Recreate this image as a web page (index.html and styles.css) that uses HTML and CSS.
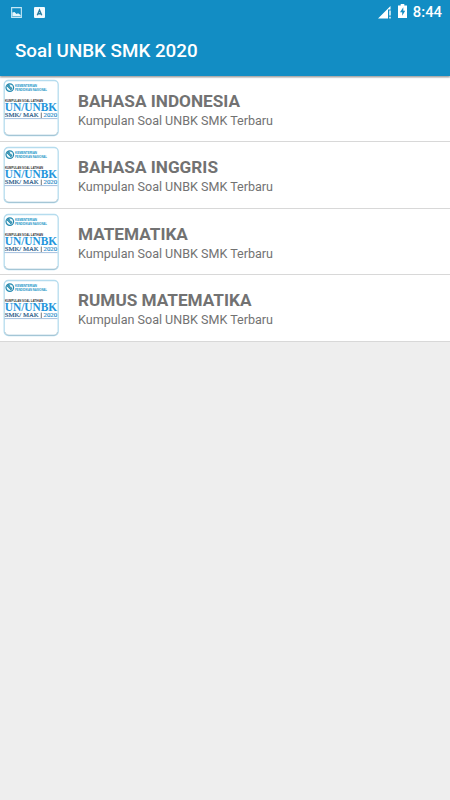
FILE: index.html
```html
<!DOCTYPE html>
<html lang="id">
<head>
<meta charset="utf-8">
<title>Soal UNBK SMK 2020</title>
<link rel="stylesheet" href="styles.css">
</head>
<body>
<header class="top">
  <div class="status">
    <svg class="picture" viewBox="0 0 12 12"><path d="M.7 .7h10.6v10.6H.7z" fill="none" stroke="#c5e8f6" stroke-width="1.2"/><path d="M1.5 10.2V6L3.8 5.4 6 7.6l1.7-.8 2.8 2v1.4z" fill="#e5f6fc"/></svg>
    <svg class="letter" viewBox="0 0 11 11"><rect width="11" height="11" rx="1" fill="#f2fbff"/><path d="M3.3 8.2 5.5 3l2.2 5.2M4.2 6.7h2.6" fill="none" stroke="#287da0" stroke-width="1.4"/></svg>
    <span class="spacer"></span>
    <svg class="signal" viewBox="0 0 14 13"><path d="M0 12.5 12.5 0v3.5H10v9z" fill="#fff"/><path d="M12 4.5v5M12 10.8v1.7" stroke="#fff" stroke-width="1.4"/></svg>
    <svg class="battery" viewBox="0 0 9 14"><path d="M2.7 0h3.6v1.4H9V14H0V1.4h2.7z" fill="#fff"/><path d="M5.3 3.3 2 8.2h2.2v3.5L7.2 6.8H5.3z" fill="#168cc2"/></svg>
    <span class="clock">8:44</span>
  </div>
  <h1 class="title">Soal UNBK SMK 2020</h1>
</header>
<main class="list">
  <article class="row"><div class="thumb"></div><div class="copy"><h2>BAHASA INDONESIA</h2><p>Kumpulan Soal UNBK SMK Terbaru</p></div></article>
  <article class="row"><div class="thumb"></div><div class="copy"><h2>BAHASA INGGRIS</h2><p>Kumpulan Soal UNBK SMK Terbaru</p></div></article>
  <article class="row"><div class="thumb"></div><div class="copy"><h2>MATEMATIKA</h2><p>Kumpulan Soal UNBK SMK Terbaru</p></div></article>
  <article class="row"><div class="thumb"></div><div class="copy"><h2>RUMUS MATEMATIKA</h2><p>Kumpulan Soal UNBK SMK Terbaru</p></div></article>
</main>
<template id="logo">
  <svg viewBox="0 0 56 58" width="56" height="58">
    <rect x="1.2" y="1.5" width="54" height="55" rx="4" fill="#fff" stroke="#b5dcee" stroke-width="1.3"/>
    <path d="M2 53q.5 3 4 3.3h45q3-.3 3.5-3.3" fill="none" stroke="#8ba5b0" stroke-width=".5"/>
    <circle cx="6.8" cy="8.6" r="3.8" fill="#e7f7fb" stroke="#2589b0" stroke-width="1.2"/>
    <path d="M4 7l2-1.5 1 2.5 2 1-1 2-2-2z" fill="#3ba3c6" stroke="#1c718f" stroke-width=".6"/>
    <g font-family="Liberation Sans, sans-serif" font-weight="bold" fill="#2496c7">
      <text x="12" y="8.4" font-size="3.1" textLength="22" lengthAdjust="spacingAndGlyphs">KEMENTERIAN</text>
      <text x="12" y="12.2" font-size="3.1" textLength="32" lengthAdjust="spacingAndGlyphs">PENDIDIKAN NASIONAL</text>
      <text x="2" y="22.9" font-size="2.9" fill="#333" textLength="38" lengthAdjust="spacingAndGlyphs">KUMPULAN SOAL LATIHAN</text>
    </g>
    <g font-family="Liberation Serif, serif" font-weight="bold">
      <text x="1.7" y="32.4" font-size="11.8" fill="#2496dc" textLength="52.5" lengthAdjust="spacingAndGlyphs">UN/UNBK</text>
      <text x="1.7" y="38.4" font-size="7" font-weight="normal" fill="#174f80" stroke="#174f80" stroke-width=".15" textLength="34" lengthAdjust="spacingAndGlyphs">SMK/ MAK</text>
      <text x="40.5" y="38.4" font-size="7" font-weight="normal" fill="#2488c6" stroke="#2488c6" stroke-width=".15" textLength="13.5" lengthAdjust="spacingAndGlyphs">2020</text>
    </g>
    <path d="M38.3 33.6v5.5" stroke="#555" stroke-width=".8"/>
    <path d="M1.5 39.6h53" stroke="#8bafd4" stroke-width=".8"/>
  </svg>
</template>
<script src="logo.js"></script>
</body>
</html>
```

FILE: styles.css
```css
* { box-sizing: border-box; }
body { margin: 0; min-height: 800px; background: #eee; font-family: Roboto, sans-serif; }
h1, h2, p { margin: 0; }
.top { height: 76px; background: #128dc4; color: #fff; box-shadow: 0 1px 2px rgba(0,0,0,.4); position: relative; }
.status { display: flex; align-items: center; height: 25px; padding: 0 8px 0 11px; }
.picture { width: 11px; height: 11px; margin-bottom: 1px; }
.letter { width: 11px; height: 11px; margin-left: 12px; }
.spacer { flex: 1; }
.signal { width: 14px; height: 13px; margin-bottom: 1px; }
.battery { width: 9px; height: 14px; margin: 0 6px 3px; }
.clock { font-size: 14.8px; font-weight: 500; line-height: 25px; }
.title { padding-left: 15px; font-size: 18.8px; font-weight: 500; line-height: 52px; }
.list { padding-top: 2px; }
.row { display: flex; height: 66.4px; padding: 4px 0 0 3px; background: #fff; border-bottom: 1px solid #d8d8d8; }
.row:first-child { height: 64.4px; padding-top: 1px; }
.thumb { width: 56px; height: 58px; flex: none; }
.thumb svg { display: block; }
.copy { padding: 11px 0 0 19px; color: #727272; }
.row:first-child .copy { padding-top: 12px; }
.copy h2 { font-size: 17.2px; font-weight: 700; line-height: 21px; }
.copy p { font-size: 12.55px; line-height: 18px; }
```

FILE: logo.js
```js
const logo = document.getElementById('logo');
document.querySelectorAll('.thumb').forEach((thumb) => {
  thumb.append(logo.content.cloneNode(true));
});
```
